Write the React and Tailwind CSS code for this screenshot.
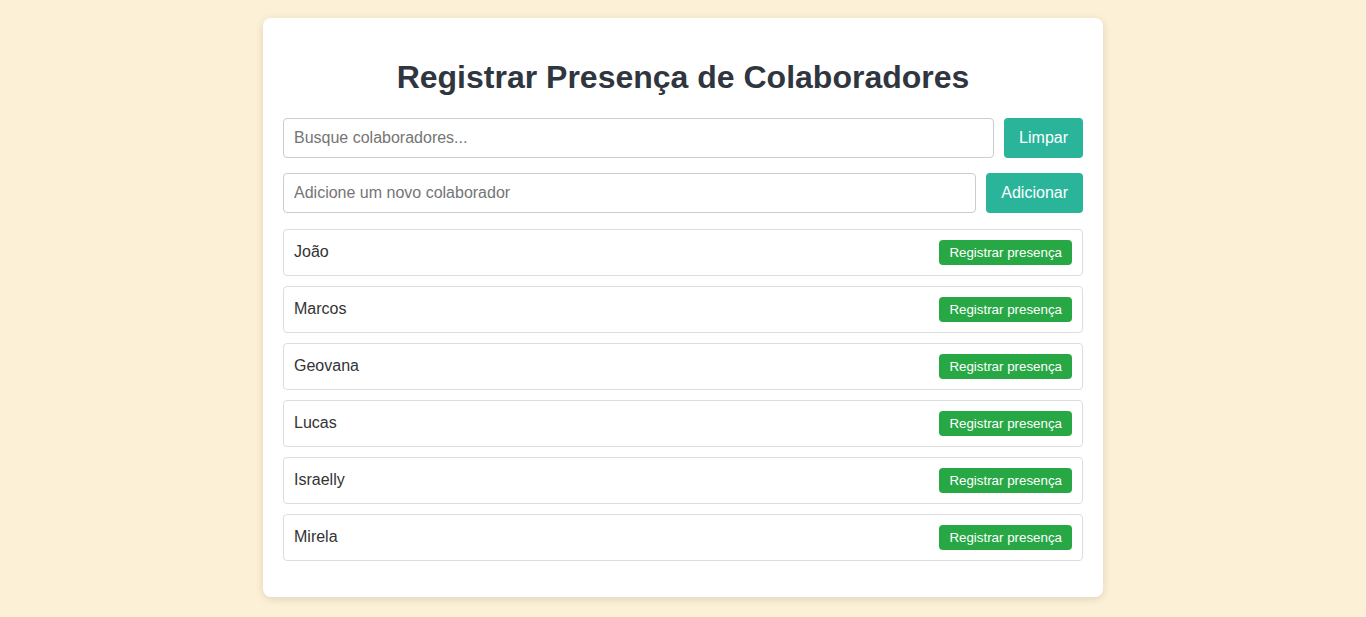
import React, { useState } from 'react'

const initial = ['João', 'Marcos', 'Geovana', 'Lucas', 'Israelly', 'Mirela']

function App() {
  const [busca, setBusca] = useState('')
  const [novo, setNovo] = useState('')
  const [lista, setLista] = useState(initial)

  const filtrados = lista.filter((n) => n.toLowerCase().includes(busca.toLowerCase()))

  return (
    <div className="min-h-[617px] bg-[#fcf0d6] pt-[18px] pb-5 font-['Liberation_Sans',Arial,sans-serif]">
      <div className="mx-auto w-[840px] bg-white rounded-lg px-5 pt-5 pb-9 shadow-[0_2px_8px_rgba(0,0,0,0.12)]">
        <h1 className="text-center text-[32px] leading-[37px] font-bold text-[#2f3640] mt-[21px] mb-[22px]">
          Registrar Presença de Colaboradores
        </h1>

        {/* busca */}
        <div className="flex gap-[10px] mb-[15px]">
          <input
            value={busca}
            onChange={(e) => setBusca(e.target.value)}
            placeholder="Busque colaboradores..."
            className="flex-1 h-10 px-[10px] text-base border border-[#ccc] rounded text-[#333] placeholder:text-[#757575] outline-none"
          />
          <button
            onClick={() => setBusca('')}
            className="h-10 px-[15px] bg-[#2ab59b] text-white text-base rounded"
          >
            Limpar
          </button>
        </div>

        {/* novo colaborador */}
        <div className="flex gap-[10px] mb-4">
          <input
            value={novo}
            onChange={(e) => setNovo(e.target.value)}
            placeholder="Adicione um novo colaborador"
            className="flex-1 h-10 px-[10px] text-base border border-[#ccc] rounded text-[#333] placeholder:text-[#757575] outline-none"
          />
          <button
            onClick={() => {
              if (novo.trim()) {
                setLista([...lista, novo.trim()])
                setNovo('')
              }
            }}
            className="h-10 px-[15px] bg-[#2ab59b] text-white text-base rounded"
          >
            Adicionar
          </button>
        </div>

        <ul className="flex flex-col gap-[10px]">
          {filtrados.map((nome) => (
            <li
              key={nome}
              className="flex items-center justify-between h-[47px] px-[10px] border border-[#ddd] rounded text-base text-[#333]"
            >
              <span className="mb-[2px]">{nome}</span>
              <button className="h-[25px] px-[10px] bg-[#28a745] text-white text-[13.333px] rounded">
                Registrar presença
              </button>
            </li>
          ))}
        </ul>
      </div>
    </div>
  )
}

export default App
